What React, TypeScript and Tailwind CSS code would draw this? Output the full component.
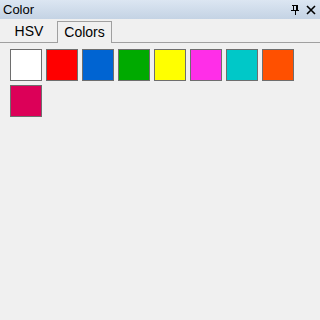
import React from "react";

const colors = ["#ffffff", "#ff0000", "#0064d2", "#00aa00", "#ffff00", "#ff2ee8", "#00c8c8", "#ff5000", "#dc0058"];

export default function App() {
  return (
    <div className="w-[320px] h-[320px] bg-[#f0f0f0] flex flex-col" style={{ fontFamily: '"Liberation Sans", Arial, sans-serif' }}>
      <div className="h-[19px] flex items-center justify-between pl-[3px] pr-[4px] bg-gradient-to-b from-[#dce6f2] to-[#c4d3e4] text-[13px] text-black">
        <span className="leading-none">Color</span>
        <div className="flex items-center gap-[6px]">
          <svg width="10" height="11" viewBox="0 0 10 11">
            <path d="M2 1h6M3 1v5M6 1v5M7 1v5M1 6h8M5 6v5" stroke="#000" strokeWidth="1" fill="none" shapeRendering="crispEdges" />
          </svg>
          <svg width="10" height="10" viewBox="0 0 10 10">
            <path d="M1 1L9 9M9 1L1 9" stroke="#000" strokeWidth="1.6" fill="none" />
          </svg>
        </div>
      </div>
      <div className="mt-[2px] h-[22px] flex items-end border-b border-[#a0a0a0] pl-[1px]">
        <div className="w-[56px] h-[21px] flex items-center justify-center text-[14px] text-black">HSV</div>
        <div className="w-[55px] h-[22px] -mb-px bg-[#f0f0f0] border border-b-0 border-[#a0a0a0] flex items-center justify-center text-[14px] text-black">Colors</div>
      </div>
      <div className="pl-[10px] pt-[6px] flex flex-wrap gap-[4px] w-[310px]">
        {colors.map((c, i) => (
          <div key={i} className="w-[32px] h-[32px] border-[1.5px] border-[#6e6e6e]" style={{ backgroundColor: c }} />
        ))}
      </div>
    </div>
  );
}
